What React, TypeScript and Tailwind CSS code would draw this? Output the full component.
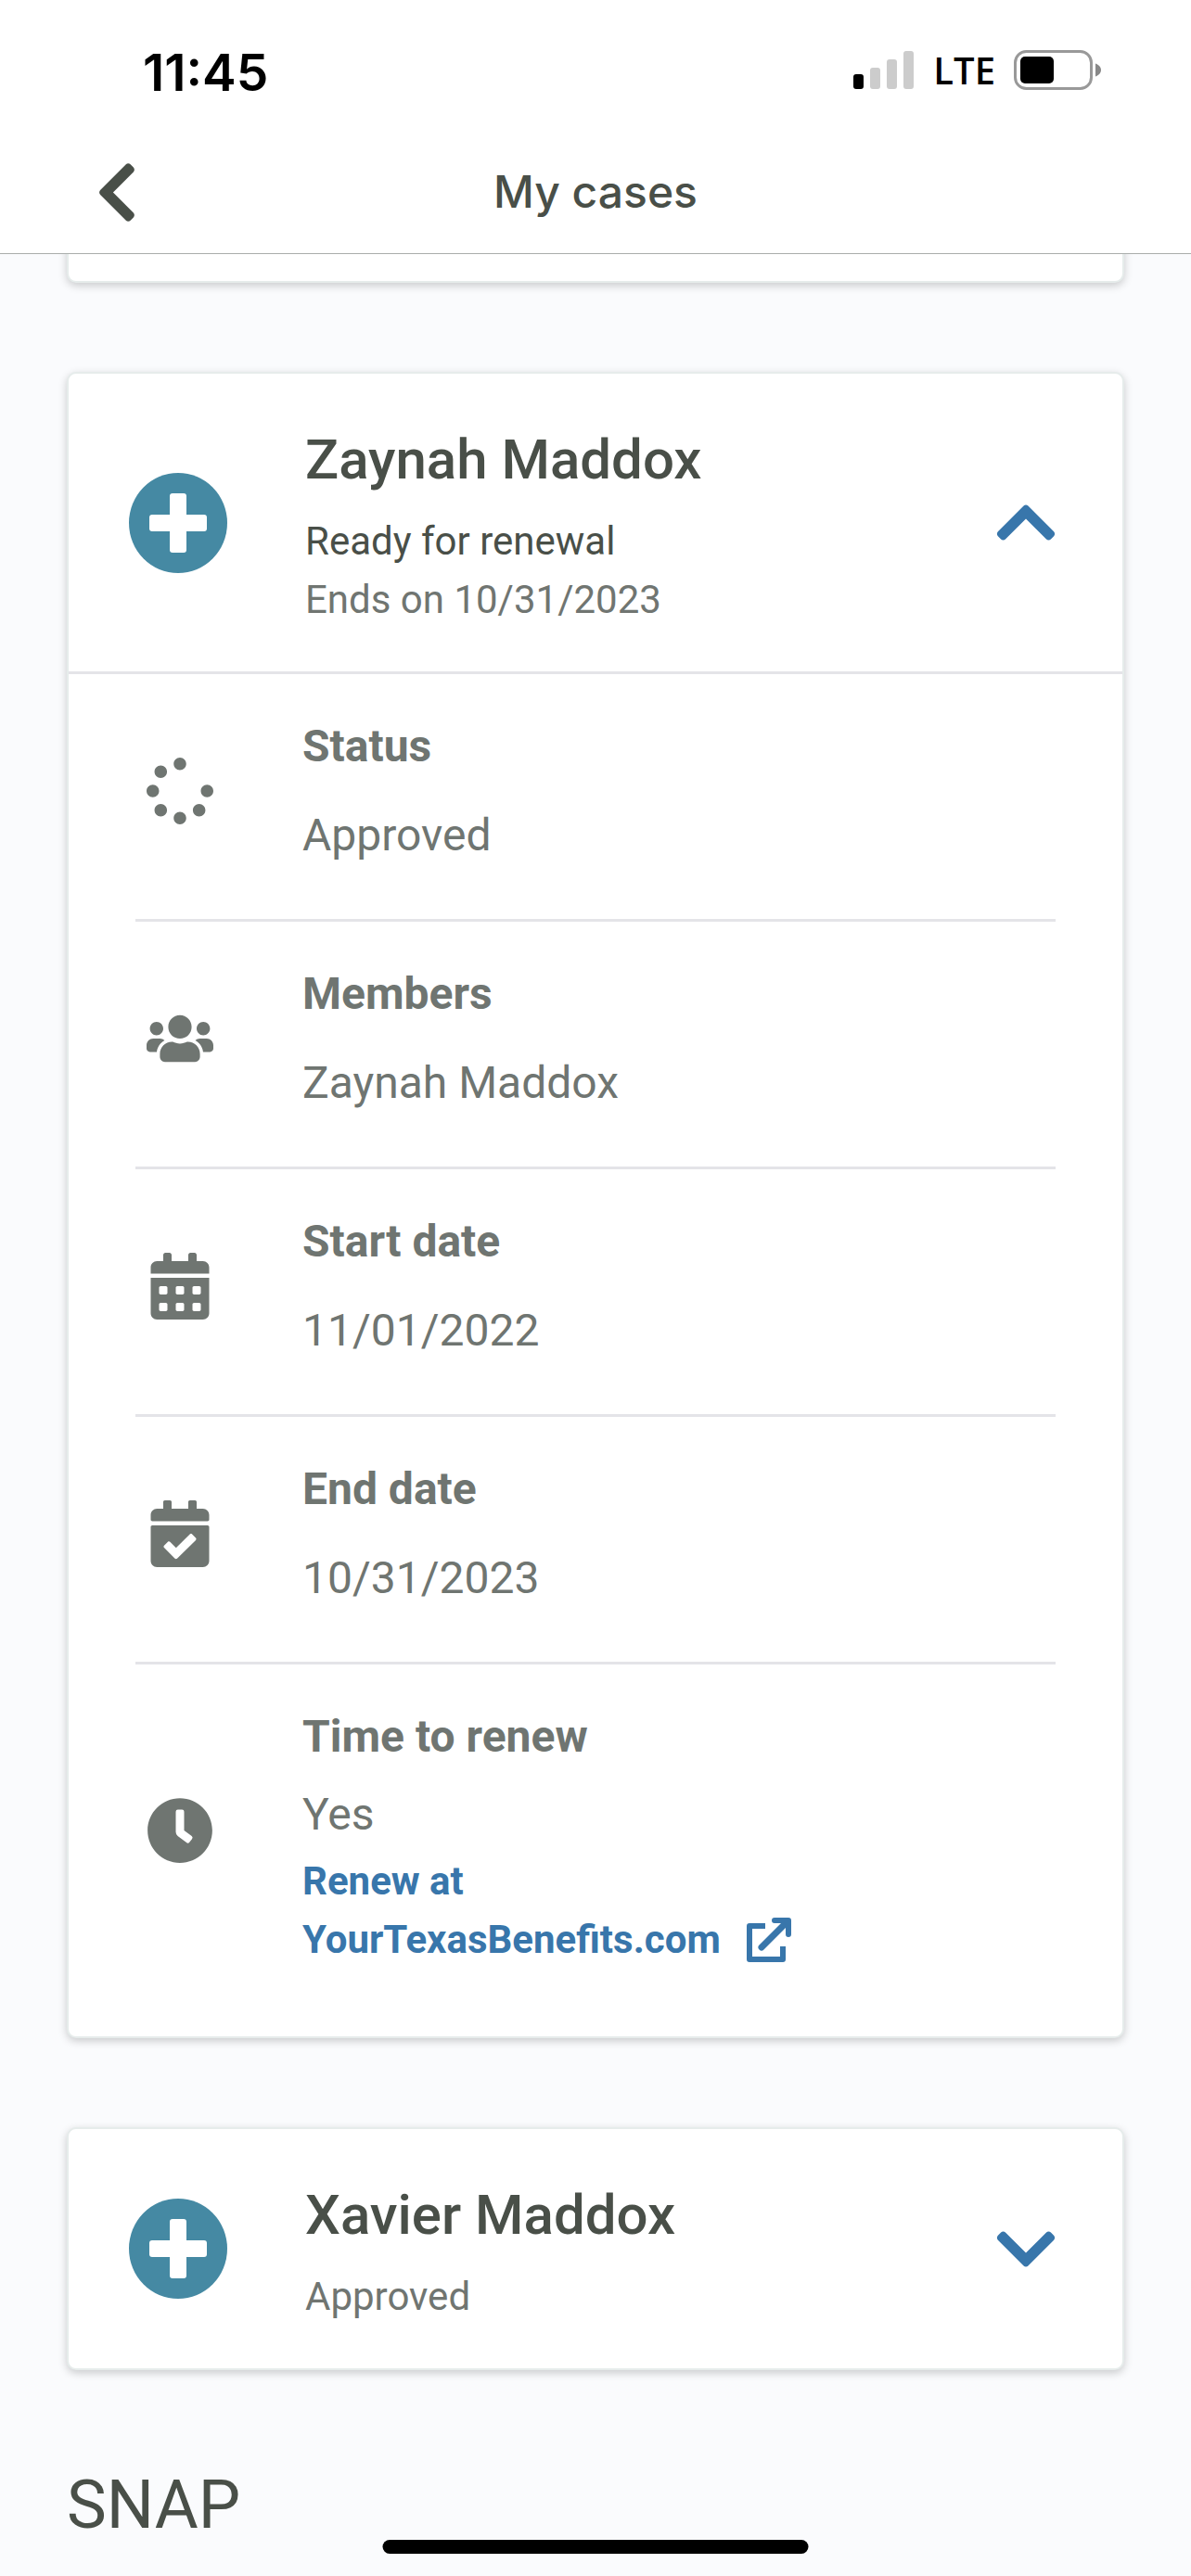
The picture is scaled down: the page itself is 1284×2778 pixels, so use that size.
import { useState } from "react";
import type { ReactNode } from "react";
import {
  FaCalendarAlt,
  FaCalendarCheck,
  FaChevronDown,
  FaChevronLeft,
  FaChevronUp,
  FaClock,
  FaSpinner,
  FaUsers,
} from "react-icons/fa";

const cardClass =
  "rounded-[10px] border-2 border-[#e6eceb] bg-white shadow-[0_3px_10px_rgba(0,0,0,0.2)]";

function StatusBar() {
  return (
    <div className="flex h-[151px] items-center justify-between pl-[154px] pr-[96px] text-black">
      <span className="pt-1 font-['Inter',sans-serif] text-[55px] font-semibold leading-[64px]">
        11:45
      </span>
      <div className="flex items-center gap-5">
        <svg width="66" height="42" viewBox="0 0 66 42" aria-hidden="true">
          <rect x="0" y="25" width="11" height="16" rx="3" fill="#000" />
          <rect x="18" y="18" width="11" height="23" rx="3" fill="#ccc" />
          <rect x="36" y="9" width="11" height="32" rx="3" fill="#ccc" />
          <rect x="54" y="0" width="11" height="41" rx="3" fill="#ccc" />
        </svg>
        <span className="font-['Open_Sans',sans-serif] text-[40px] font-semibold leading-[52px]">
          LTE
        </span>
        <svg width="95" height="44" viewBox="0 0 95 44" aria-hidden="true">
          <rect
            x="1.5"
            y="1.5"
            width="82"
            height="40"
            rx="12"
            fill="none"
            stroke="#999"
            strokeWidth="3"
          />
          <rect x="7" y="7" width="36" height="29" rx="5" fill="#000" />
          <path d="M88 14.500c3.500 1.200 6 4 6 7s-2.500 5.800-6 7z" fill="#888" />
        </svg>
      </div>
    </div>
  );
}

function NavBar() {
  return (
    <div className="grid h-[123px] grid-cols-[1fr_auto_1fr] items-center border-b border-[#a9adab] px-[103px] pb-[10px]">
      <button aria-label="Back" className="justify-self-start text-[#494f48]">
        <FaChevronLeft className="h-[73px] w-[46px]" />
      </button>
      <h1 className="font-['Inter',sans-serif] text-[48px] font-medium leading-[60px] text-[#494f48]">
        My cases
      </h1>
    </div>
  );
}

function PlusBadge() {
  return (
    <svg
      className="h-[108px] w-[106px] shrink-0"
      viewBox="0 0 106 108"
      aria-hidden="true">
      <ellipse cx="53" cy="54" rx="53" ry="54" fill="#4589a3" />
      <rect x="44" y="22" width="18" height="64" rx="3" fill="#fff" />
      <rect x="22" y="45" width="62" height="18" rx="3" fill="#fff" />
    </svg>
  );
}

function ExternalIcon() {
  return (
    <svg
      className="h-12 w-12"
      viewBox="0 0 48 48"
      fill="none"
      stroke="currentColor"
      strokeWidth="6"
      strokeLinejoin="round"
      aria-hidden="true">
      <path d="M20 9H3V45H39V31" />
      <path d="M16 32L43 5" strokeWidth="7" strokeLinecap="round" />
      <path d="M30 3H45V18" strokeLinecap="round" />
    </svg>
  );
}

type CaseCardProps = {
  name: string;
  lines: ReactNode;
  defaultOpen?: boolean;
  children?: ReactNode;
};

function CaseCard({ name, lines, defaultOpen = false, children }: CaseCardProps) {
  const [isOpen, setIsOpen] = useState(defaultOpen);

  return (
    <section className={cardClass}>
      <button
        aria-expanded={isOpen}
        onClick={() => setIsOpen(!isOpen)}
        className="flex w-full items-center pl-[65px] pr-[72px] text-left">
        <PlusBadge />
        <span className="ml-[84px] flex-1 pb-[46px] pt-[52px]">
          <span className="block pb-[15px] text-[60px] font-medium leading-[82px] text-[#494f48]">
            {name}
          </span>
          <span className="block text-[42px] leading-[63px] text-[#707571]">
            {lines}
          </span>
        </span>
        <span className="text-[#3876ab]">
          {isOpen ? (
            <FaChevronUp className="h-[73px] w-[64px]" />
          ) : (
            <FaChevronDown className="h-[73px] w-[64px]" />
          )}
        </span>
      </button>
      {isOpen && children}
    </section>
  );
}

type DetailRowProps = {
  icon: ReactNode;
  label: string;
  children: ReactNode;
};

function DetailRow({ icon, label, children }: DetailRowProps) {
  return (
    <div className="mx-[72px] flex items-center border-b-[3px] border-[#e4e4e8] pb-[42px] pl-3 pt-[30px] text-[#6f7571] last:border-b-0">
      <span className="text-[72px]">{icon}</span>
      <div className="ml-24">
        <dt className="text-[48px] font-bold leading-[96px]">{label}</dt>
        {children}
      </div>
    </div>
  );
}

function App() {
  const details = [
    { label: "Status", value: "Approved", icon: <FaSpinner /> },
    { label: "Members", value: "Zaynah Maddox", icon: <FaUsers /> },
    { label: "Start date", value: "11/01/2022", icon: <FaCalendarAlt /> },
    { label: "End date", value: "10/31/2023", icon: <FaCalendarCheck /> },
  ];

  return (
    <div className="flex h-screen flex-col overflow-hidden bg-[#fafbfd] font-['Roboto',sans-serif]">
      <header className="relative z-10 bg-white">
        <StatusBar />
        <NavBar />
      </header>

      <main className="flex flex-col gap-24 px-[72px]">
        {/* Tail of the card scrolled under the header */}
        <div className={`${cardClass} -mt-4 h-[47px]`} />

        <CaseCard
          name="Zaynah Maddox"
          defaultOpen
          lines={
            <>
              <span className="block text-[#494f48]">Ready for renewal</span>
              <span className="block">Ends on 10/31/2023</span>
            </>
          }>
          <dl className="border-t-[3px] border-[#e4e4e8] pb-[31px]">
            {details.map((item) => (
              <DetailRow key={item.label} icon={item.icon} label={item.label}>
                <dd className="text-[48px] leading-[96px]">{item.value}</dd>
              </DetailRow>
            ))}
            <DetailRow icon={<FaClock />} label="Time to renew">
              <dd>
                <p className="pb-1 text-[48px] leading-[72px]">Yes</p>
                <a
                  href="#renew"
                  className="block text-[42px] font-bold leading-[63px] text-[#3876ab]">
                  <span className="block">Renew at</span>
                  <span className="flex items-center gap-7">
                    YourTexasBenefits.com
                    <ExternalIcon />
                  </span>
                </a>
              </dd>
            </DetailRow>
          </dl>
        </CaseCard>

        <CaseCard name="Xavier Maddox" lines="Approved" />

        <h2 className="pt-2 text-[72px] leading-[84px] text-[#494f48]">SNAP</h2>
      </main>

      {/* Home indicator */}
      <div className="fixed bottom-6 left-1/2 h-[15px] w-[459px] -translate-x-1/2 rounded-full bg-black" />
    </div>
  );
}

export default App;
